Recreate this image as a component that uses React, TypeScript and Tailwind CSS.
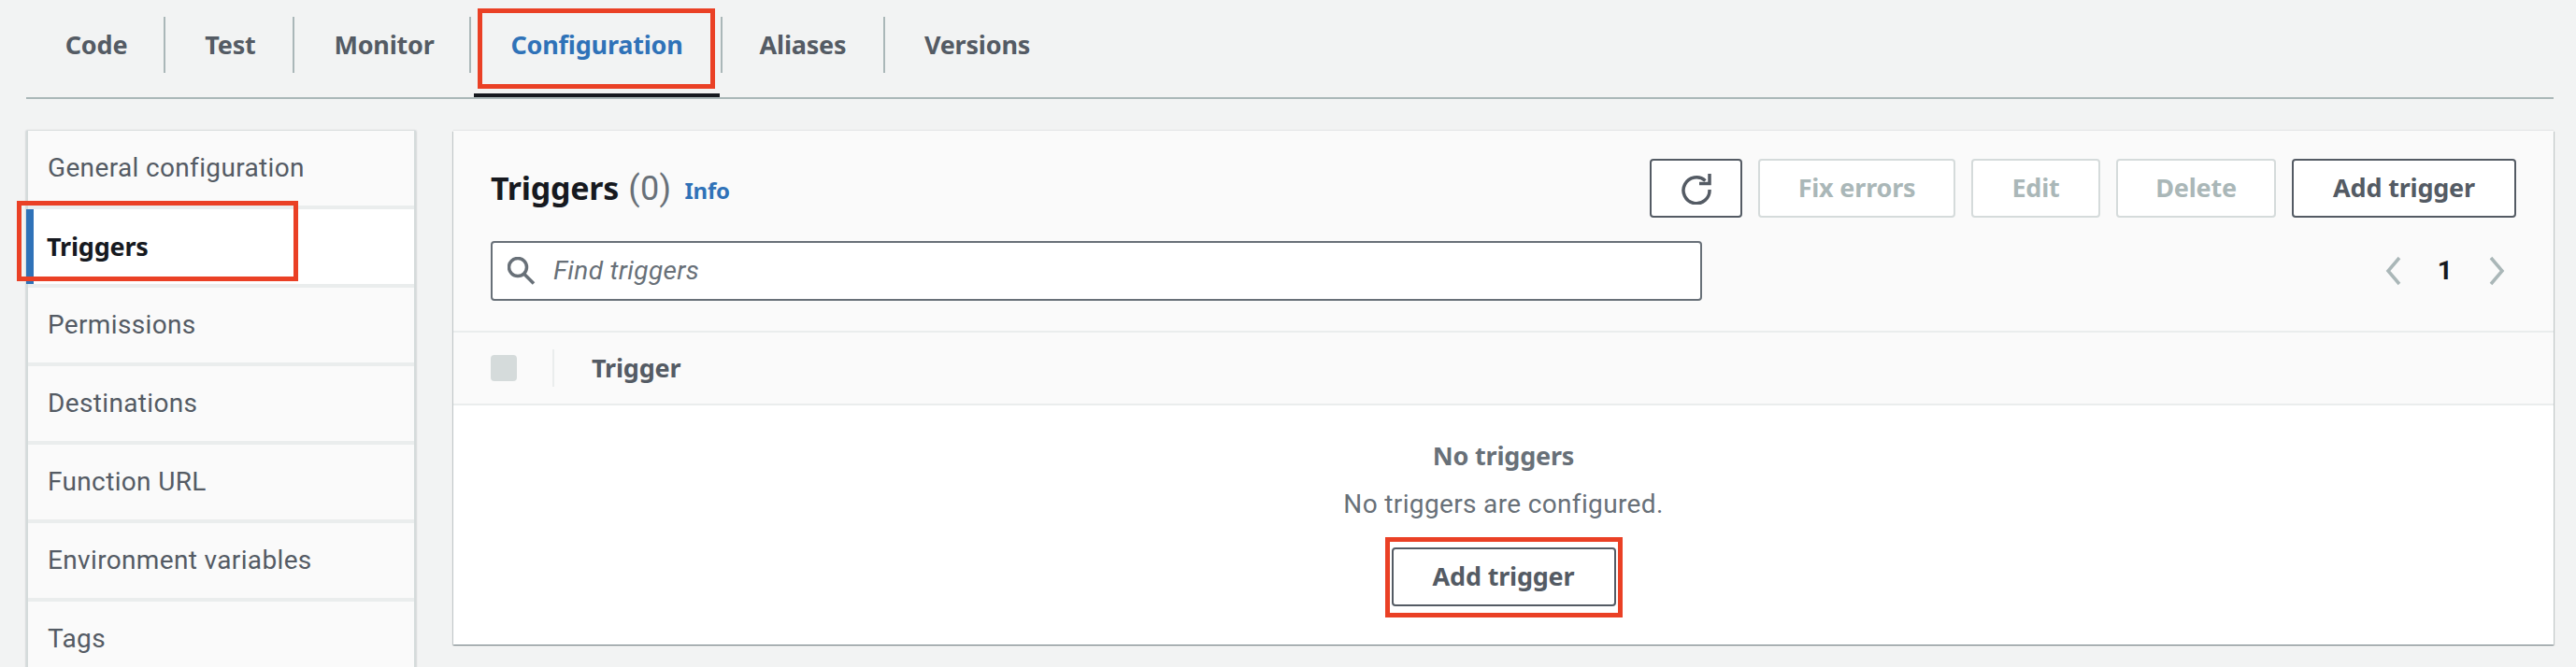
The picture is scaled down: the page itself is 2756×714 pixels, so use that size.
import React from "react";

const B = "font-['Noto_Sans',sans-serif] font-bold text-[27px] tracking-[-0.2px]";

const tabs = [
  { label: "Code", w: 149, cls: "pl-[3px]" },
  { label: "Test", w: 138, cls: "pl-[3px]" },
  { label: "Monitor", w: 189, cls: "pl-[5px]" },
];

const menu = ["Permissions", "Destinations", "Function URL", "Environment variables", "Tags"];

function Btn({ children, off, w }: { children: React.ReactNode; off?: boolean; w: string }) {
  return (
    <div
      className={`${w} h-[63px] flex items-center justify-center rounded-[4px] border-2 bg-white ${B} ${
        off ? "border-[#d5dbdb] text-[#aab7b8]" : "border-[#545b64] text-[#545b64]"
      }`}
    >
      {children}
    </div>
  );
}

export default function App() {
  return (
    <div className="relative w-[2756px] h-[714px] overflow-hidden bg-[#f2f3f3] pl-[28px] pr-[24px] font-['Roboto',sans-serif] tracking-[0.35px]">
      <div className="flex h-[106px] border-b-2 border-[#aab7b8] pt-[18px]">
        {tabs.map((t) => (
          <div key={t.label} className={`h-[60px] flex items-center justify-center border-r-2 border-[#aab7b8] ${t.cls} ${B} text-[#545b64]`} style={{ width: t.w }}>
            {t.label}
          </div>
        ))}
        <div className="relative w-[263px] ml-[3px] mr-[1px] h-[86px] border-b-[4px] border-[#16191f]">
          <div className={`h-[60px] flex items-center justify-center ${B} text-[#2f72b8]`}>Configuration</div>
          <div className="absolute left-[4px] top-[-9px] w-[254px] h-[86px] border-[5px] border-[#ea4025]"></div>
        </div>
        <div className={`h-[60px] w-[176px] flex items-center justify-center border-x-2 border-[#aab7b8] ${B} text-[#545b64]`}>Aliases</div>
        <div className={`h-[60px] w-[197px] flex items-center justify-center ${B} text-[#545b64]`}>Versions</div>
      </div>

      <div className="flex gap-[40px] pt-[34px]">
        <div className="w-[417px] h-[600px] shrink-0 flex flex-col gap-[4px] bg-[#eaeded] border-x-2 border-[#d5dbdb] shadow-[0_0_2px_rgba(0,28,36,0.3)]">
          <div className="h-[80px] shrink-0 bg-[#fafafa] pl-[21px] flex items-center text-[28px] text-[#545b64]">General configuration</div>
          <div className={`relative h-[80px] shrink-0 bg-white pl-[14px] flex items-center ${B} text-[#16191f] border-l-[8px] border-[#2f72b8] ml-[-2px]`}>
            Triggers
            <div className="absolute left-[-18px] top-[-9px] w-[301px] h-[86px] border-[5px] border-[#ea4025]"></div>
          </div>
          {menu.map((m) => (
            <div key={m} className="h-[80px] shrink-0 bg-[#fafafa] pl-[21px] flex items-center text-[28px] text-[#545b64]">{m}</div>
          ))}
        </div>

        <div className="w-[2247px] h-[550px] shrink-0 flex flex-col bg-white shadow-[0_1px_1px_0_rgba(0,28,36,0.3),1px_1px_1px_0_rgba(0,28,36,0.15),-1px_1px_1px_0_rgba(0,28,36,0.15),0_-1px_1px_0_rgba(0,28,36,0.05)]">
          <div className="h-[216px] shrink-0 bg-[#fafafa] border-b-2 border-[#eaeded] pl-[40px] pr-[40px] pt-[30px]">
            <div className="flex items-center h-[63px]">
              <span className="font-['Noto_Sans',sans-serif] font-bold text-[34px] tracking-[-0.2px] text-[#16191f]">Triggers</span>
              <span className="text-[36px] text-[#687078] ml-[10px]">(0)</span>
              <span className="font-['Noto_Sans',sans-serif] text-[24px] font-bold tracking-[-0.2px] text-[#2f72b8] ml-[14px] mt-[4px]">Info</span>
              <div className="flex-1"></div>
              <div className="flex gap-[17px]">
                <Btn w="w-[99px]">
                  <svg width="34" height="34" viewBox="0 0 34 34" fill="none" stroke="#545b64" strokeWidth="3.5">
                    <path d="M26.5 8.5 A14 14 0 1 0 31 18" />
                    <path d="M20 11.5 H31 V1" />
                  </svg>
                </Btn>
                <Btn off w="w-[211px]">Fix errors</Btn>
                <Btn off w="w-[138px]">Edit</Btn>
                <Btn off w="w-[171px]">Delete</Btn>
                <Btn w="w-[240px]">Add trigger</Btn>
              </div>
            </div>
            <div className="flex items-center mt-[25px] h-[64px] pr-[12px]">
              <div className="w-[1296px] h-[64px] flex items-center rounded-[4px] border-2 border-[#687078] bg-white pl-[16px]">
                <svg width="30" height="30" viewBox="0 0 30 30" fill="none" stroke="#687078" strokeWidth="3.5">
                  <circle cx="11" cy="11" r="9.5" />
                  <path d="M17.5 18 L28 28.5" />
                </svg>
                <span className="ml-[19px] text-[28px] italic text-[#687078]">Find triggers</span>
              </div>
              <div className="flex-1"></div>
              <svg width="17" height="32" viewBox="0 0 17 32" fill="none" stroke="#aab7b8" strokeWidth="3.5"><path d="M15 2 L3 16 L15 30" /></svg>
              <span className="w-[94px] text-center text-[28px] font-bold text-[#16191f]">1</span>
              <svg width="17" height="32" viewBox="0 0 17 32" fill="none" stroke="#aab7b8" strokeWidth="3.5"><path d="M2 2 L14 16 L2 30" /></svg>
            </div>
          </div>
          <div className="h-[78px] shrink-0 bg-[#fafafa] border-b-2 border-[#eaeded] pl-[40px] flex items-center">
            <div className="w-[28px] h-[28px] rounded-[4px] bg-[#d5dbdb]"></div>
            <div className="w-[2px] h-[40px] bg-[#eaeded] ml-[38px]"></div>
            <span className={`ml-[40px] ${B} text-[#545b64]`}>Trigger</span>
          </div>
          <div className="flex-1 flex flex-col items-center bg-white pt-[34px]">
            <div className={`leading-[40px] ${B} text-[#687078]`}>No triggers</div>
            <div className="text-[28px] leading-[40px] text-[#687078] mt-[12px]">No triggers are configured.</div>
            <div className="relative mt-[26px]">
              <Btn w="w-[240px]">Add trigger</Btn>
              <div className="absolute left-[-7px] top-[-11px] w-[254px] h-[86px] border-[5px] border-[#ea4025]"></div>
            </div>
          </div>
        </div>
      </div>
    </div>
  );
}
